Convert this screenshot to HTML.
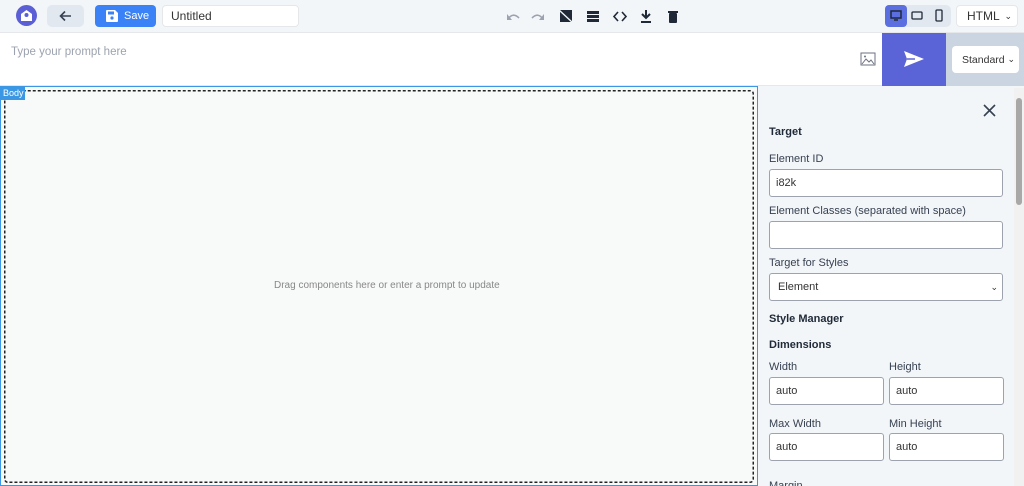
<!DOCTYPE html>
<html><head><style>
*{box-sizing:border-box;margin:0;padding:0}
html,body{width:1024px;height:486px;overflow:hidden}
body{font-family:"Liberation Sans",sans-serif;background:#f3f6f9;position:relative;font-size:12px;color:#1f2937}
.a{position:absolute}
.inp{position:absolute;background:#fff;border:1px solid #9ca3af;border-radius:3px;font-size:11px;padding-left:6px;display:flex;align-items:center;color:#333}
.lbl{position:absolute;font-size:11px;color:#374151}
.b{position:absolute;font-size:11px;font-weight:bold;color:#1f2937}
</style></head><body>
<div class="a" style="left:0;top:0;width:1024px;height:33px;background:#f3f6f9;border-bottom:1px solid #e5e7eb"></div>
<div class="a" style="left:16px;top:5px;width:21px;height:21px;border-radius:50%;background:#5b5fd6"></div>
<svg class="a" style="left:20px;top:9px" width="13" height="13" viewBox="0 0 13 13"><path d="M1 5 L6.5 1 L12 5 V12 H1Z" fill="#fff"/><circle cx="6.5" cy="6" r="2" fill="#5b5fd6"/></svg>
<div class="a" style="left:47px;top:5px;width:37px;height:22px;border-radius:5px;background:#e2e8f0"></div>
<svg class="a" style="left:59px;top:10px" width="13" height="12" viewBox="0 0 13 12"><path d="M12 6H2M6 1.5L1.5 6L6 10.5" stroke="#374151" stroke-width="1.6" fill="none"/></svg>
<div class="a" style="left:95px;top:5px;width:61px;height:22px;border-radius:4px;background:#3b82f6;color:#fff;font-size:11px;padding-left:29px;line-height:22px">Save</div>
<svg class="a" style="left:106px;top:10px" width="12" height="12" viewBox="0 0 12 12"><path d="M0 1a1 1 0 011-1h8l3 3v8a1 1 0 01-1 1H1a1 1 0 01-1-1z" fill="#fff"/><rect x="2" y="1.5" width="6" height="3" fill="#3b82f6"/><circle cx="6" cy="8" r="1.6" fill="#3b82f6"/></svg>
<div class="inp" style="left:162px;top:5px;width:137px;height:22px;border:1px solid #e5e7eb;border-radius:4px;font-size:12px;color:#333;padding-left:8px">Untitled</div>
<svg class="a" style="left:505px;top:10px" width="180" height="14" viewBox="0 0 180 14">
<path d="M3 9 Q8 2 14 8" stroke="#9ca3af" stroke-width="1.6" fill="none"/><path d="M2 4v6h5" fill="#9ca3af"/>
<path d="M27 8 Q33 2 38 9" stroke="#9ca3af" stroke-width="1.6" fill="none"/><path d="M39 4v6h-5" fill="#9ca3af"/>
<rect x="55" y="0" width="12" height="12" fill="#1f2937"/><path d="M54 0L68 13" stroke="#f3f6f9" stroke-width="1.4"/>
<rect x="82" y="1" width="12" height="3" fill="#1f2937"/><rect x="82" y="5" width="12" height="3" fill="#1f2937"/><rect x="82" y="9" width="12" height="3" fill="#1f2937"/>
<path d="M113 2L109 6.5L113 11M117 2L121 6.5L117 11" stroke="#1f2937" stroke-width="1.6" fill="none"/>
<path d="M141 0V7M137 4L141 8L145 4" stroke="#1f2937" stroke-width="2" fill="none"/><rect x="136" y="11" width="10" height="2" fill="#1f2937"/>
<rect x="163" y="1" width="10" height="2" fill="#1f2937"/><rect x="164" y="3" width="8" height="10" rx="1" fill="#1f2937"/>
</svg>
<div class="a" style="left:885px;top:5px;width:66px;height:22px;border-radius:5px;background:#e2e8f0"></div>
<div class="a" style="left:885px;top:5px;width:22px;height:22px;border-radius:4px;background:#5b6fe0"></div>
<svg class="a" style="left:885px;top:5px" width="66" height="22" viewBox="0 0 66 22"><rect x="6" y="6" width="10" height="7" fill="none" stroke="#1f2937" stroke-width="1.5"/><path d="M9 15h4" stroke="#1f2937" stroke-width="1.5"/>
<rect x="27" y="7" width="10" height="7" rx="1" fill="none" stroke="#1f2937" stroke-width="1.3"/><rect x="51" y="5" width="6" height="11" rx="1" fill="none" stroke="#1f2937" stroke-width="1.3"/></svg>
<div class="inp" style="left:956px;top:5px;width:62px;height:22px;border:1px solid #e5e7eb;border-radius:4px;font-size:12px;padding-left:10px">HTML<span style="position:absolute;right:5px;font-size:9px">⌄</span></div>
<div class="a" style="left:0;top:33px;width:882px;height:53px;background:#fff;border-bottom:1px solid #e5e7eb"></div>
<div class="a" style="left:11px;top:46px;font-size:11.5px;color:#9ca3af">Type your prompt here</div>
<svg class="a" style="left:860px;top:52px" width="16" height="14" viewBox="0 0 16 14"><rect x="1" y="1" width="14" height="12" fill="none" stroke="#6b7280" stroke-width="1"/><path d="M2 12L6 7L9 10L11 8L14 12" stroke="#6b7280" fill="none"/><circle cx="5" cy="4.5" r="1" fill="#6b7280"/></svg>
<div class="a" style="left:882px;top:33px;width:64px;height:53px;background:#5b64d6"></div>
<svg class="a" style="left:904px;top:51px" width="20" height="16" viewBox="0 0 20 16"><path d="M0 0L20 8L0 16L3 8Z" fill="#fff"/><path d="M3 8H11" stroke="#5b64d6" stroke-width="1.5"/></svg>
<div class="a" style="left:946px;top:33px;width:78px;height:53px;background:#cbd5e1"></div>
<div class="inp" style="left:952px;top:46px;width:67px;height:27px;border:none;border-radius:4px;font-size:10.5px;padding-left:10px">Standard<span style="position:absolute;right:4px;font-size:9px">⌄</span></div>
<div class="a" style="left:0;top:86px;width:758px;height:400px;background:#f8f9f9;border:1px solid #3b97e3"></div>
<svg class="a" style="left:0;top:86px" width="758" height="400"><rect x="4.75" y="4.75" width="748.5" height="391.5" rx="3" fill="none" stroke="#222" stroke-width="1.5" stroke-dasharray="3 2"/></svg>
<div class="a" style="left:0;top:87px;width:25px;height:13px;background:#3b97e3;color:#fff;font-size:9px;line-height:13px;padding-left:3px">Body</div>
<div class="a" style="left:274px;top:280px;font-size:10px;color:#888">Drag components here or enter a prompt to update</div>
<div class="a" style="left:1014px;top:88px;width:10px;height:398px;background:#f1f1f1"></div>
<div class="a" style="left:1016px;top:98px;width:6px;height:107px;border-radius:3px;background:#a8a8a8"></div>
<svg class="a" style="left:983px;top:104px" width="13" height="13" viewBox="0 0 13 13"><path d="M1 1L12 12M12 1L1 12" stroke="#374151" stroke-width="1.6"/></svg>
<div class="b" style="left:769px;top:126px">Target</div>
<div class="lbl" style="left:769px;top:153px">Element ID</div>
<div class="inp" style="left:769px;top:169px;width:234px;height:28px">i82k</div>
<div class="lbl" style="left:769px;top:205px">Element Classes (separated with space)</div>
<div class="inp" style="left:769px;top:221px;width:234px;height:28px"></div>
<div class="lbl" style="left:769px;top:257px">Target for Styles</div>
<div class="inp" style="left:769px;top:273px;width:234px;height:28px;padding-left:8px">Element<span style="position:absolute;right:4px;font-size:9px">⌄</span></div>
<div class="b" style="left:769px;top:313px">Style Manager</div>
<div class="b" style="left:769px;top:339px">Dimensions</div>
<div class="lbl" style="left:769px;top:361px">Width</div>
<div class="lbl" style="left:889px;top:361px">Height</div>
<div class="inp" style="left:769px;top:377px;width:115px;height:28px">auto</div>
<div class="inp" style="left:889px;top:377px;width:115px;height:28px">auto</div>
<div class="lbl" style="left:769px;top:418px">Max Width</div>
<div class="lbl" style="left:889px;top:418px">Min Height</div>
<div class="inp" style="left:769px;top:433px;width:115px;height:28px">auto</div>
<div class="inp" style="left:889px;top:433px;width:115px;height:28px">auto</div>
<div class="lbl" style="left:769px;top:480px">Margin</div>
</body></html>
